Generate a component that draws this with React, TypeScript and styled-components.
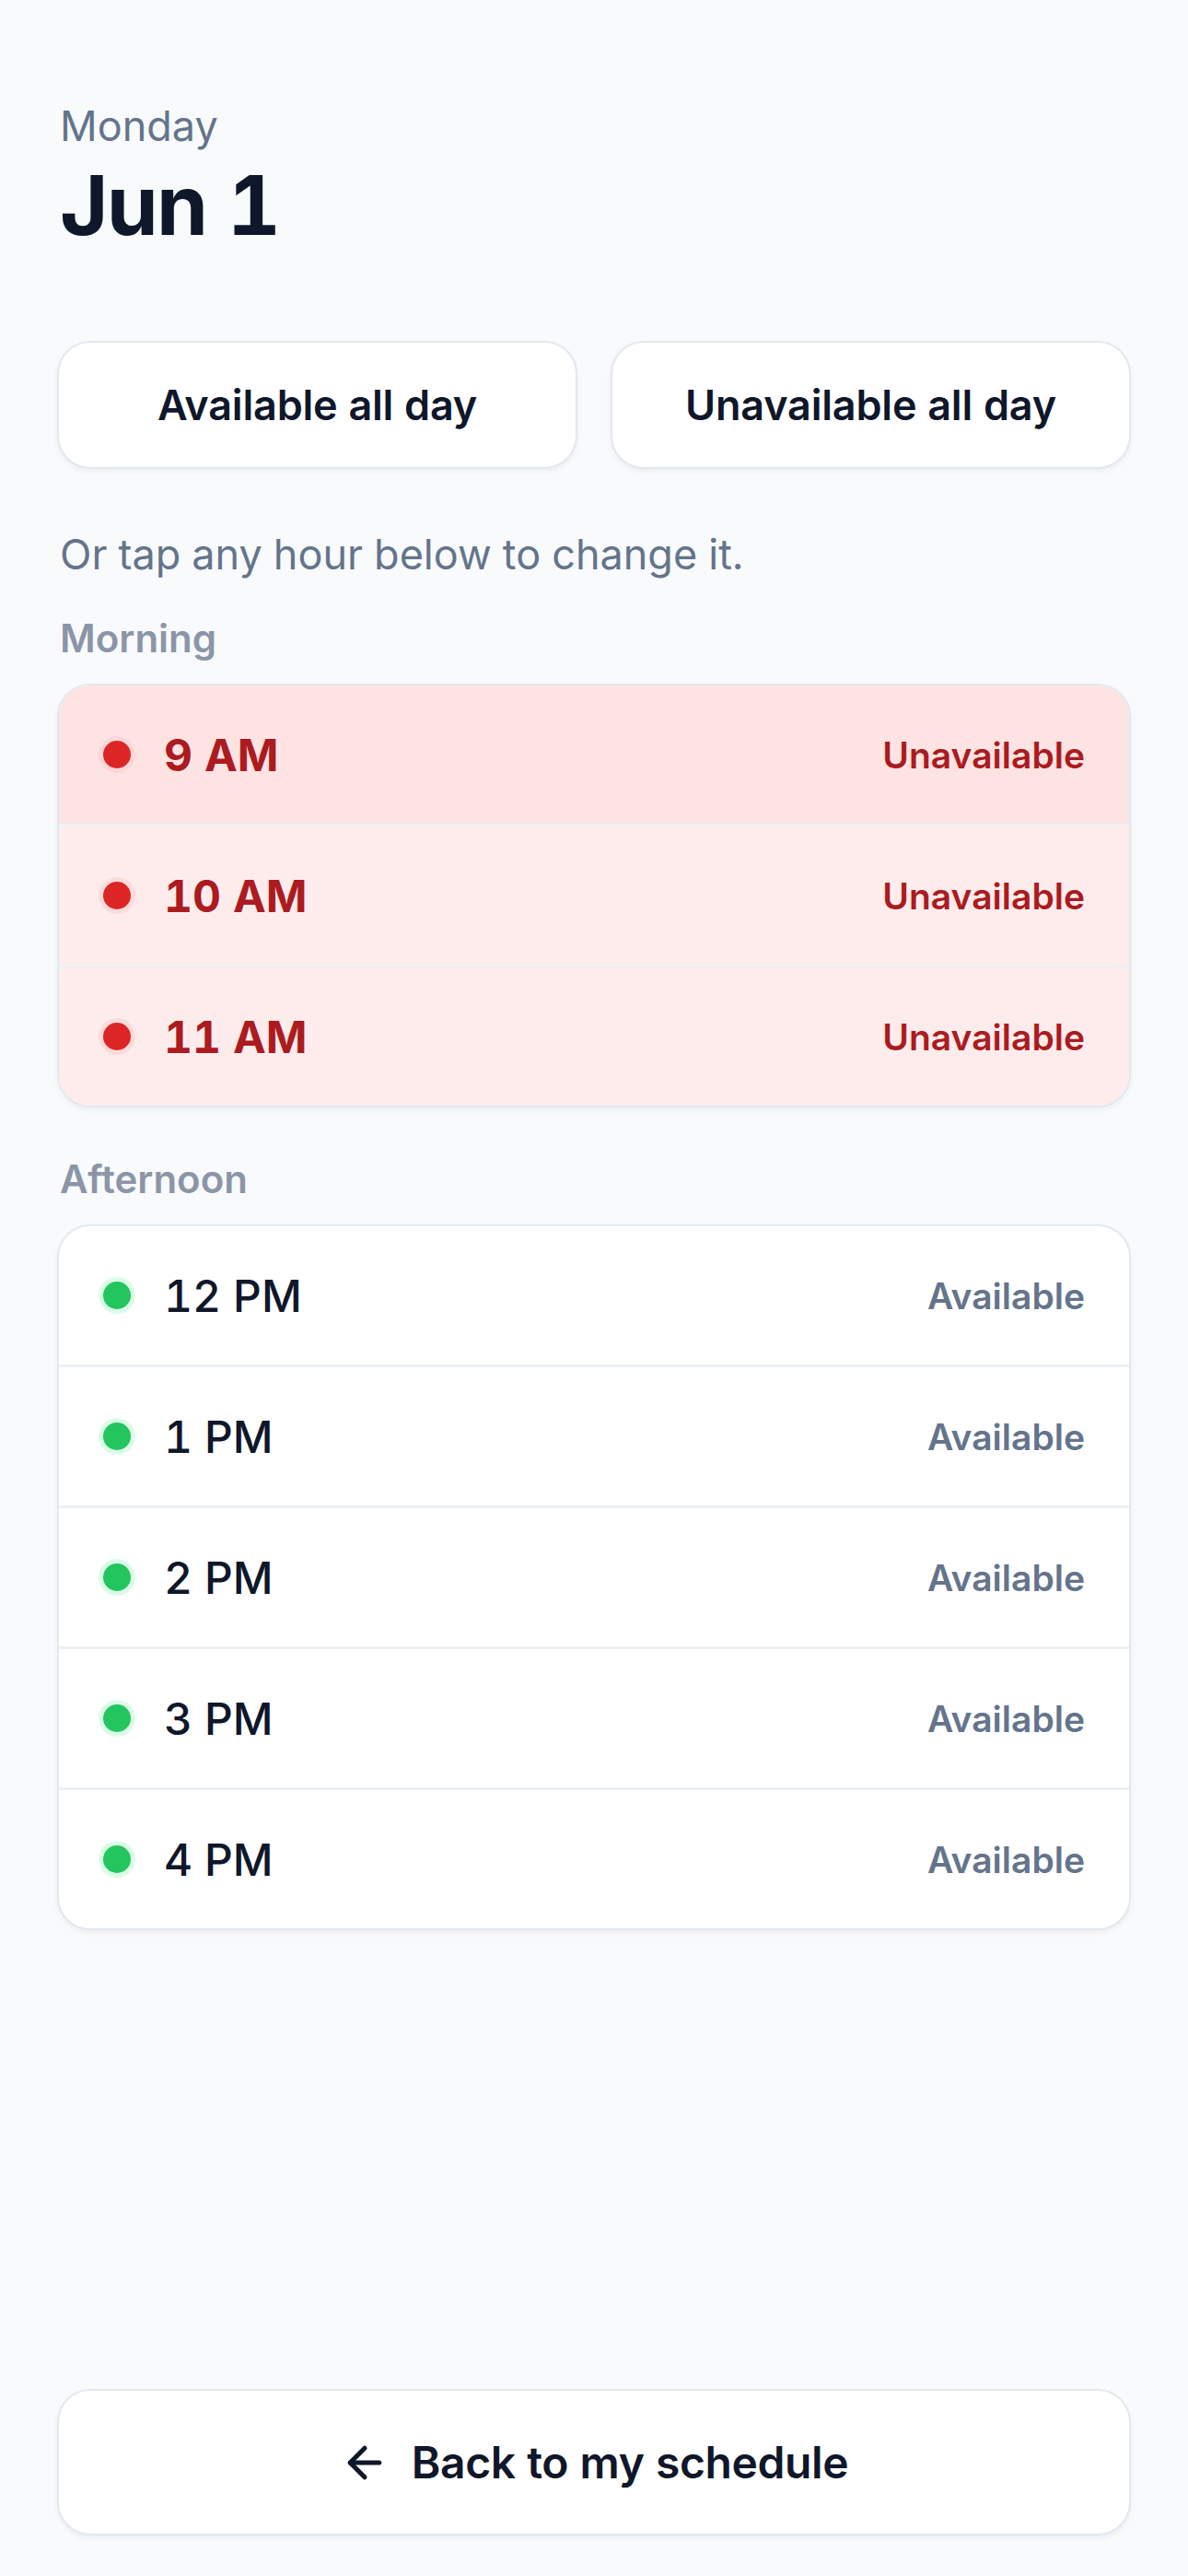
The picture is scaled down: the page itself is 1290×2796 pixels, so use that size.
import React from 'react';
import styled, { createGlobalStyle } from 'styled-components';
import { ArrowLeft } from 'lucide-react';

type Status = 'available' | 'unavailable';

interface Hour {
  label: string;
  status: Status;
  active?: boolean;
}

const morning: Hour[] = [
  { label: '9 AM', status: 'unavailable', active: true },
  { label: '10 AM', status: 'unavailable' },
  { label: '11 AM', status: 'unavailable' },
];

const afternoon: Hour[] = [
  { label: '12 PM', status: 'available' },
  { label: '1 PM', status: 'available' },
  { label: '2 PM', status: 'available' },
  { label: '3 PM', status: 'available' },
  { label: '4 PM', status: 'available' },
];

const GlobalStyle = createGlobalStyle`
  * {
    box-sizing: border-box;
  }
  html, body {
    margin: 0;
    padding: 0;
    background: #f8fafc;
  }
  body {
    font-family: Inter, "Noto Sans", "Liberation Sans", sans-serif;
    font-variant-numeric: tabular-nums;
    -webkit-font-smoothing: antialiased;
  }
  button {
    font-family: inherit;
    font-variant-numeric: inherit;
  }
`;

const DaySchedule = ({ hours }: { hours: Hour[] }) => (
  <S.HourList>
    {hours.map((hour) => (
      <S.HourRow key={hour.label} $status={hour.status} $active={hour.active}>
        <S.Dot $status={hour.status} />
        <S.HourLabel $status={hour.status}>{hour.label}</S.HourLabel>
        <S.StatusText $status={hour.status}>
          {hour.status === 'available' ? 'Available' : 'Unavailable'}
        </S.StatusText>
      </S.HourRow>
    ))}
  </S.HourList>
);

const App = () => {
  return (
    <>
      <GlobalStyle />
      <S.Page>
        <S.Header>
          <S.Weekday>Monday</S.Weekday>
          <S.DateTitle>Jun 1</S.DateTitle>
        </S.Header>

        <S.QuickActions>
          <S.ActionButton type="button">Available all day</S.ActionButton>
          <S.ActionButton type="button">Unavailable all day</S.ActionButton>
        </S.QuickActions>

        <S.Hint>Or tap any hour below to change it.</S.Hint>

        <S.Section $first>
          <S.SectionLabel>Morning</S.SectionLabel>
          <DaySchedule hours={morning} />
        </S.Section>

        <S.Section>
          <S.SectionLabel>Afternoon</S.SectionLabel>
          <DaySchedule hours={afternoon} />
        </S.Section>

        <S.Footer>
          <S.BackButton type="button">
            <ArrowLeft size={54} strokeWidth={2.25} />
            Back to my schedule
          </S.BackButton>
        </S.Footer>
      </S.Page>
    </>
  );
};

export default App;

const S = {
  Page: styled.main`
    min-height: 100vh;
    display: flex;
    flex-direction: column;
    padding: 110px 62px 44px;
  `,

  Header: styled.header`
    padding: 0 3px;
  `,

  Weekday: styled.p`
    margin: 0;
    font-size: 45px;
    line-height: 54px;
    font-weight: 400;
    color: #64748b;
  `,

  DateTitle: styled.h1`
    margin: 9px 0 0;
    font-size: 90px;
    line-height: 99px;
    font-weight: 700;
    letter-spacing: -0.02em;
    color: #0f172a;
  `,

  QuickActions: styled.div`
    margin-top: 98px;
    display: grid;
    grid-template-columns: 1fr 1fr;
    gap: 36px;
  `,

  ActionButton: styled.button`
    height: 139px;
    border: 2px solid #e2e8f0;
    border-radius: 36px;
    background: #ffffff;
    box-shadow: 0 3px 6px rgba(15, 23, 42, 0.05);
    font-size: 45px;
    font-weight: 600;
    letter-spacing: -0.2px;
    color: #0f172a;
    cursor: pointer;
  `,

  Hint: styled.p`
    margin: 61px 0 0;
    padding: 0 3px;
    font-size: 45px;
    line-height: 63px;
    color: #64748b;
  `,

  Section: styled.section<{ $first?: boolean }>`
    margin-top: ${(props) => (props.$first ? '33px' : '51px')};
    display: flex;
    flex-direction: column;
    gap: 22px;
  `,

  SectionLabel: styled.h2`
    margin: 0;
    padding: 0 3px;
    font-size: 42px;
    line-height: 54px;
    font-weight: 600;
    color: #8b95a7;
  `,

  HourList: styled.ul`
    margin: 0;
    padding: 0;
    list-style: none;
    background: #ffffff;
    border: 2px solid #e2e8f0;
    border-radius: 36px;
    overflow: hidden;
    box-shadow: 0 3px 6px rgba(15, 23, 42, 0.05);
  `,

  HourRow: styled.li<{ $status: Status; $active?: boolean }>`
    height: 150px;
    display: flex;
    align-items: center;
    gap: 36px;
    padding: 0 48px;
    background: ${(props) =>
      props.$status === 'unavailable'
        ? props.$active
          ? '#fee3e3'
          : '#feecec'
        : '#ffffff'};

    & + & {
      height: 153px;
      border-top: 3px solid
        ${(props) => (props.$status === 'unavailable' ? '#efebec' : '#edf0f4')};
    }
  `,

  Dot: styled.span<{ $status: Status }>`
    flex: none;
    width: 30px;
    height: 30px;
    border-radius: 50%;
    background: ${(props) => (props.$status === 'unavailable' ? '#dc2626' : '#22c55e')};
    box-shadow: 0 0 0 5px
      ${(props) =>
        props.$status === 'unavailable' ? 'rgba(252, 200, 200, 0.45)' : '#dcfce7'};
  `,

  HourLabel: styled.span<{ $status: Status }>`
    font-size: 48px;
    font-weight: ${(props) => (props.$status === 'unavailable' ? 700 : 500)};
    color: ${(props) => (props.$status === 'unavailable' ? '#ab1b1f' : '#0f172a')};
  `,

  StatusText: styled.span<{ $status: Status }>`
    margin-left: auto;
    font-size: 39px;
    font-weight: 600;
    color: ${(props) => (props.$status === 'unavailable' ? '#ab1b1f' : '#64748b')};
  `,

  Footer: styled.footer`
    margin-top: auto;
  `,

  BackButton: styled.button`
    width: 100%;
    height: 159px;
    display: flex;
    align-items: center;
    justify-content: center;
    gap: 24px;
    border: 2px solid #e2e8f0;
    border-radius: 36px;
    background: #ffffff;
    box-shadow: 0 3px 6px rgba(15, 23, 42, 0.05);
    font-size: 48px;
    font-weight: 600;
    letter-spacing: -0.4px;
    color: #0f172a;
    cursor: pointer;
  `,
};
